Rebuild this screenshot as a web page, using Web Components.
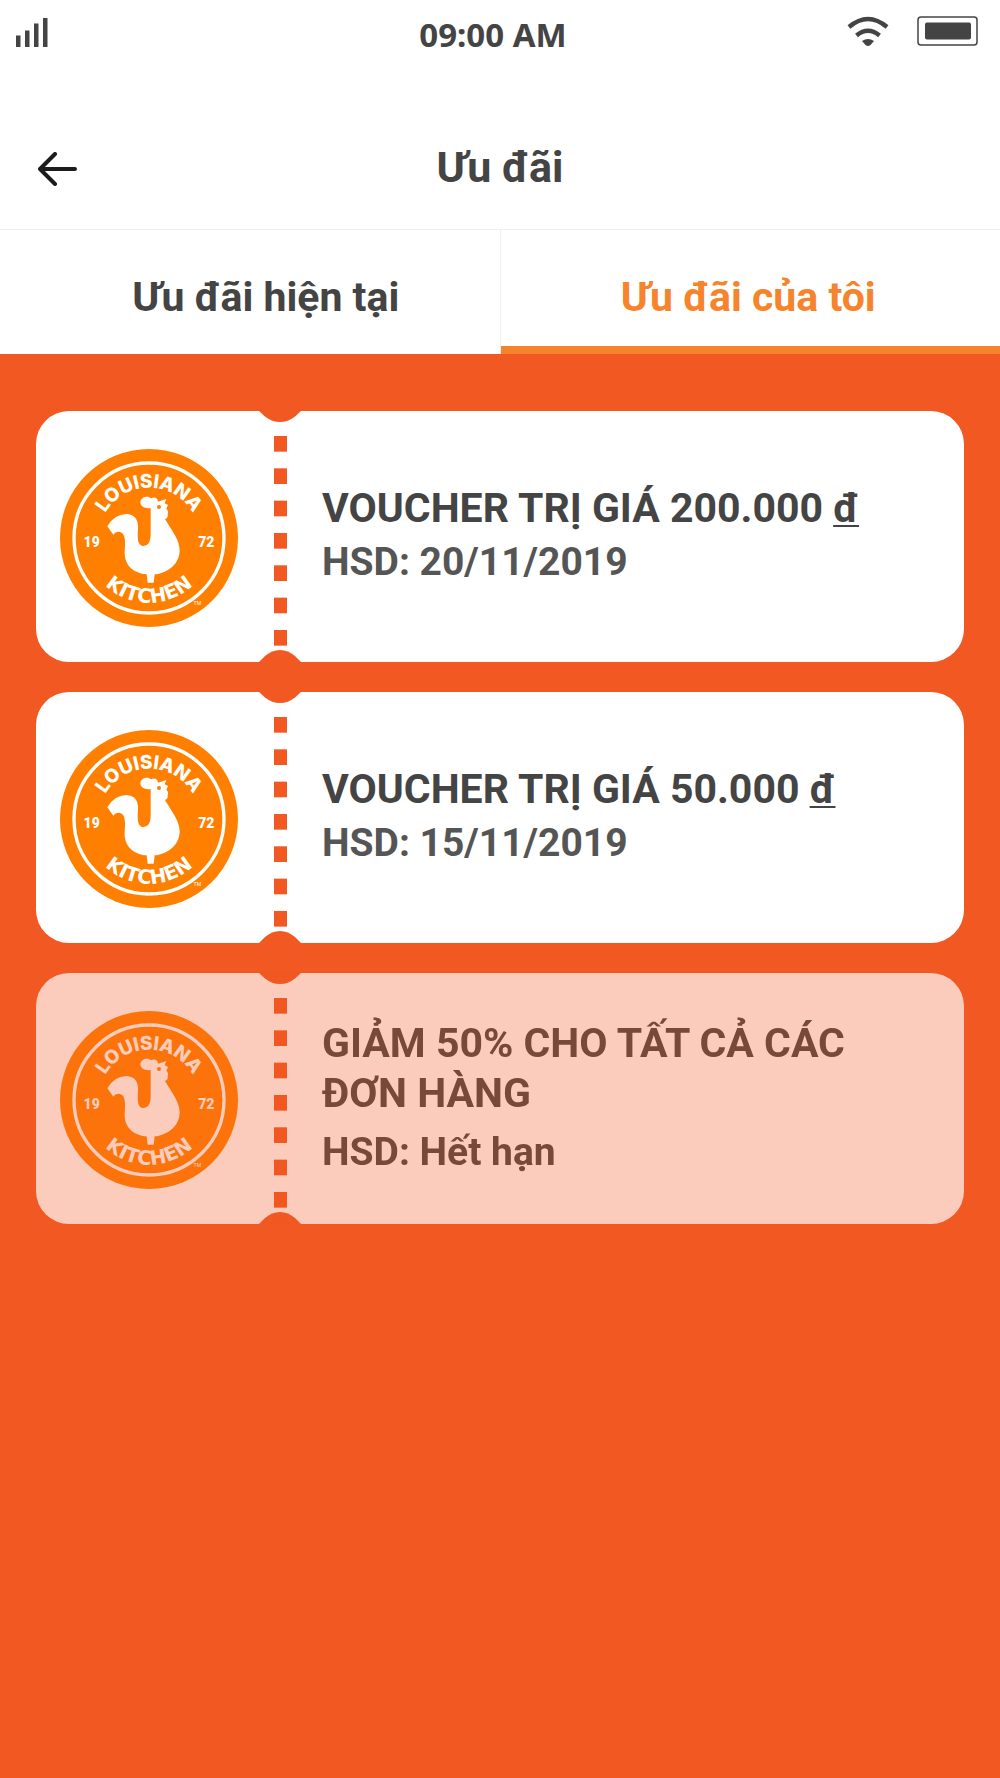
<!DOCTYPE html>
<html lang="vi">
<head>
<meta charset="utf-8">
<meta name="viewport" content="width=device-width, initial-scale=1">
<title>Ưu đãi</title>
<style>
  :root {
    --brand: #f15822;
    --accent: #f5842c;
    --logo: #ff8000;
    --ink: #444;
    --ink-soft: #555;
    --line: #eee;
  }
  body {
    margin: 0;
    background: var(--brand);
    color: var(--ink);
    font-family: Roboto, "Noto Sans", sans-serif;
    font-weight: 700;
  }
</style>
</head>
<body>
<offers-page></offers-page>

<script>
const define = (name, html) => {
  const template = document.createElement('template');
  template.innerHTML = html;
  customElements.define(name, class extends HTMLElement {
    constructor() {
      super();
      this.attachShadow({ mode: 'open' }).append(template.content.cloneNode(true));
    }
  });
};

define('status-bar', `
  <style>
    :host { display: grid; grid-template-columns: 1fr auto 1fr; align-items: center;
      height: 62px; padding: 0 22px 0 8px; background: #fff; }
    svg { display: block; fill: var(--ink); }
    .signal { margin: 2px 0 0 8px; }
    time { font: 700 33px/46px "Noto Sans", sans-serif; padding-top: 8px; }
    .right { display: flex; justify-content: flex-end; align-items: center; gap: 28px; }
  </style>
  <svg class="signal" width="32" height="30" viewBox="0 0 32 30" role="img" aria-label="Signal">
    <path d="M0 18.500h4.500v11.500H0zM9 13.500h4.500v16.500H9zM18 6.500h4.500v23.500H18zM27 1h4.500v29H27z"/>
  </svg>
  <time>09:00 AM</time>
  <div class="right">
    <svg width="42" height="30" viewBox="0 0 42 30" role="img" aria-label="Wi-Fi">
      <path d="M2 11Q21-5 40 11M9.500 19.500Q21 10 32.500 19.500" fill="none" stroke="#444" stroke-width="4.500"/>
      <path d="M15 25Q21 21 27 25L23.500 29Q21 31 18.500 29Z"/>
    </svg>
    <svg width="61" height="30" viewBox="0 0 61 30" role="img" aria-label="Battery">
      <rect x="1" y="1" width="59" height="28" rx="3" fill="none" stroke="#444" stroke-width="1.500"/>
      <rect x="8" y="6.500" width="46" height="17" rx="2"/>
    </svg>
  </div>
`);

define('page-header', `
  <style>
    :host { display: grid; grid-template-columns: 1fr auto 1fr; align-items: center;
      height: 168px; padding: 42px 38px 0; box-sizing: border-box;
      background: #fff; border-bottom: 1px solid var(--line); }
    button { justify-self: start; padding: 4px 0 0; border: 0; background: none; cursor: pointer; }
    svg { display: block; }
    h1 { margin: 0; font-size: 43px; line-height: 52px; }
  </style>
  <button type="button" aria-label="Quay lại">
    <svg width="39" height="34" viewBox="0 0 39 34" fill="none" stroke="#1c1c1c" stroke-width="4" stroke-linecap="round" stroke-linejoin="round">
      <path d="M17 2L2 17L17 32M2 17H37"/>
    </svg>
  </button>
  <h1><slot></slot></h1>
`);

define('tab-item', `
  <style>
    :host { display: flex; flex: 1 1 0; box-sizing: border-box; border-right: 1px solid var(--line); }
    button { flex: 1; margin: 0; padding: 28px 0 10px 32px; border: 0; border-bottom: 8px solid transparent;
      background: none; color: var(--ink); font: inherit; font-size: 41px; line-height: 78px; cursor: pointer; }
    :host([active]) { border-right: 0; }
    :host([active]) button { padding-left: 0; padding-right: 4px; color: var(--accent); border-bottom-color: var(--accent); }
  </style>
  <button type="button"><slot></slot></button>
`);

define('tab-bar', `
  <style>:host { display: flex; background: #fff; }</style>
  <slot></slot>
`);

define('brand-logo', `
  <style>
    :host { display: block; }
    svg { display: block; width: 178px; height: 178px; font-family: Inter, Lato, sans-serif; font-weight: 800; }
    .wide { font-family: "DejaVu Sans", sans-serif; font-weight: 700; }
    .year { font-family: Roboto, sans-serif; font-weight: 900; }
    .mark { font-weight: 400; }
  </style>
  <svg viewBox="31 27 534 534" fill="#fff">
    <defs>
      <path id="top" d="M147 294A151 151 0 0 1 449 294"/>
      <path id="bottom" d="M104 294A194 194 0 0 0 492 294"/>
    </defs>
    <circle cx="298" cy="294" r="267" style="fill: var(--logo)"/>
    <circle cx="298" cy="294" r="225" fill="none" stroke="#fff" stroke-width="10"/>
    <text font-size="57" text-anchor="middle"><textPath href="#top" startOffset="50%">LOUISIANA</textPath></text>
    <text class="wide" font-size="59" text-anchor="middle"><textPath href="#bottom" startOffset="50%">KITCHEN</textPath></text>
    <text class="year" x="126" y="320" font-size="42" text-anchor="middle">19</text>
    <text class="year" x="470" y="320" font-size="42" text-anchor="middle">72</text>
    <text class="mark" x="443" y="496" font-size="15" text-anchor="middle">TM</text>
    <path d="M173 259Q193 223 230 222C256 223 267 241 265 266C263 292 263 318 281 318C300 317 303 300 303 280L303 203C296 208 272 203 272 187C273 169 296 166 304 175C315 168 325 175 325 185L350 177L345 190L355 195L350 206Q358 214 354 222Q356 234 346 237C368 275 390 300 390 332C389 375 350 400 315 403L312 428L294 428L291 403C250 400 223 374 225 335C227 306 229 277 208 275Q196 275 191 284Z"/>
    <circle cx="328" cy="201" r="6" style="fill: var(--logo)"/>
  </svg>
`);

define('voucher-card', `
  <style>
    :host { display: flex; align-items: stretch; min-height: 251px; border-radius: 33px; background: #fff; }
    :host([expired]) { opacity: .7; --ink-soft: #444; --note-gap: 12px; }
    .stub { display: flex; align-items: center; padding: 2px 21px 0 24px; }
    .tear { display: flex; flex-direction: column; width: 42px; }
    .tear svg { display: block; fill: var(--brand); }
    .dashes { flex: 1; width: 13px; margin: 14px 0 4px 15px;
      background: linear-gradient(var(--brand) 16px, transparent 0) 0 0 / 100% calc((100% - 16px) / 6); }
    .info { display: flex; flex: 1; flex-direction: column; justify-content: center;
      gap: var(--note-gap, 7px); padding: 0 40px 6px 21px; }
    h2, p { margin: 0; }
    h2 { font-size: 41px; line-height: 50px; }
    p { font-size: 39px; line-height: 44px; color: var(--ink-soft); }
  </style>
  <div class="stub"><brand-logo></brand-logo></div>
  <div class="tear">
    <svg width="42" height="11" viewBox="0 0 42 11"><path d="M0 0L6 5.500Q13 11 21 11Q29 11 36 5.500L42 0Z"/></svg>
    <div class="dashes"></div>
    <svg width="42" height="12" viewBox="0 0 42 12"><path d="M0 12L6 6Q13 0 21 0Q29 0 36 6L42 12Z"/></svg>
  </div>
  <div class="info">
    <h2><slot></slot></h2>
    <p>HSD: <slot name="expiry"></slot></p>
  </div>
`);

define('offers-page', `
  <style>
    :host { display: flex; flex-direction: column; min-height: 100vh; }
    main { display: flex; flex-direction: column; gap: 30px; padding: 57px 36px; }
    u { text-decoration-thickness: 2px; text-underline-offset: 3px; text-decoration-skip-ink: none; }
  </style>
  <status-bar></status-bar>
  <page-header>Ưu đãi</page-header>
  <tab-bar>
    <tab-item>Ưu đãi hiện tại</tab-item>
    <tab-item active>Ưu đãi của tôi</tab-item>
  </tab-bar>
  <main>
    <voucher-card>VOUCHER TRỊ GIÁ 200.000 <u>đ</u><span slot="expiry">20/11/2019</span></voucher-card>
    <voucher-card>VOUCHER TRỊ GIÁ 50.000 <u>đ</u><span slot="expiry">15/11/2019</span></voucher-card>
    <voucher-card expired>GIẢM 50% CHO TẤT CẢ CÁC ĐƠN HÀNG<span slot="expiry">Hết hạn</span></voucher-card>
  </main>
`);
</script>
</body>
</html>
